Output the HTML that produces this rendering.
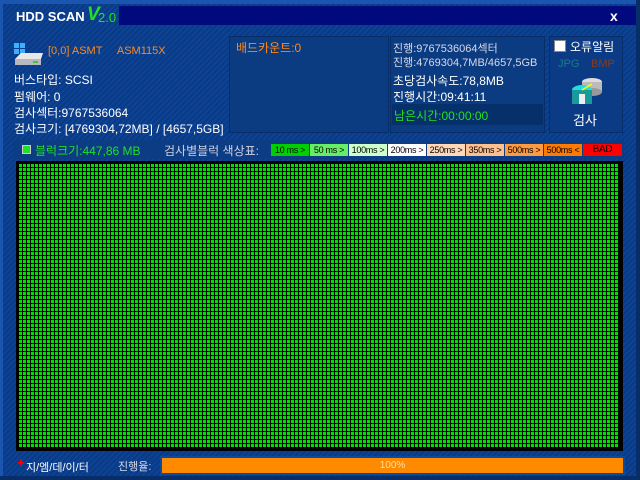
<!DOCTYPE html>
<html><head><meta charset="utf-8"><style>
*{margin:0;padding:0;box-sizing:border-box}
body{width:640px;height:480px;overflow:hidden;position:relative;font-family:"Liberation Sans","Noto Sans CJK KR",sans-serif;font-size:12px;color:#fff;
background:#0c3f8f repeating-linear-gradient(135deg,#0d4394 0 2px,#0a3a86 2px 4px);}
.a{position:absolute;white-space:nowrap}
.panel{position:absolute;background:#0b3c82;border:1px solid #082e6a}
.leg{position:absolute;top:144px;height:12px;font-size:9px;letter-spacing:-0.3px;line-height:12px;color:#000;text-align:center;overflow:hidden}
</style></head><body>
<div class="a" style="left:0;top:0;width:640px;height:4px;background:#1a56b0"></div>
<div class="a" style="left:0;top:0;width:3px;height:480px;background:#1a56b0"></div>
<div class="a" style="left:636px;top:0;width:4px;height:480px;background:#082e6a"></div>
<div class="a" style="left:0;top:476px;width:640px;height:4px;background:#082e6a"></div>
<div class="a" style="left:119px;top:6px;width:517px;height:19px;background:#000a7c"></div>
<div class="a" style="left:16px;top:9px;font-weight:bold;font-size:13px">HDD SCAN</div>
<div class="a" style="left:87px;top:4px;font-weight:bold;font-style:italic;font-size:19px;color:#22e022">V</div>
<div class="a" style="left:98px;top:10px;font-size:13px;color:#22e022">2.0</div>
<div class="a" style="left:610px;top:8px;font-weight:bold;font-size:14px">x</div>

<svg class="a" style="left:13px;top:43px" width="30" height="24">
<rect x="1" y="0" width="5" height="5" fill="#3ab0ff"/><rect x="7" y="0" width="5" height="5" fill="#3ab0ff"/>
<rect x="1" y="6" width="5" height="5" fill="#3ab0ff"/><rect x="7" y="6" width="5" height="5" fill="#3ab0ff"/>
<path d="M2 16 L8 10 L30 10 L28 16 Z" fill="#e8e8e8"/><rect x="2" y="16" width="26" height="6" fill="#b8b8c0"/><rect x="20" y="18" width="5" height="2" fill="#3c3"/>
</svg>
<div class="a" style="left:48px;top:45px;color:#ff8a1a;font-size:11px">[0,0] ASMT &nbsp;&nbsp;&nbsp; ASM115X</div>
<div class="a" style="left:14px;top:71px">버스타입: SCSI</div>
<div class="a" style="left:14px;top:88px">펌웨어: 0</div>
<div class="a" style="left:14px;top:104px">검사섹터:9767536064</div>
<div class="a" style="left:14px;top:120px;width:212px;overflow:hidden">검사크기: [4769304,72MB] / [4657,5GB]</div>

<div class="panel" style="left:229px;top:36px;width:160px;height:97px"></div>
<div class="a" style="left:236px;top:39px;color:#ff8a1a">배드카운트:0</div>
<div class="panel" style="left:390px;top:36px;width:155px;height:97px"></div>
<div class="a" style="left:393px;top:40px;color:#d8d8e8;font-size:11px">진행:9767536064섹터</div>
<div class="a" style="left:393px;top:54px;color:#d8d8e8;font-size:11px;width:150px;overflow:hidden">진행:4769304,7MB/4657,5GB</div>
<div class="a" style="left:393px;top:72px">초당검사속도:78,8MB</div>
<div class="a" style="left:393px;top:88px">진행시간:09:41:11</div>
<div class="a" style="left:392px;top:104px;width:151px;height:21px;background:#06306a"></div>
<div class="a" style="left:394px;top:107px;color:#22e022">남은시간:00:00:00</div>

<div class="panel" style="left:549px;top:36px;width:74px;height:97px;background:#0b3b84"></div>
<div class="a" style="left:554px;top:40px;width:12px;height:12px;background:#fff;border:1px solid #888"></div>
<div class="a" style="left:570px;top:38px">오류알림</div>
<div class="a" style="left:558px;top:58px;color:#1a7a8a;font-size:11px">JPG</div>
<div class="a" style="left:591px;top:58px;color:#8a3a1a;font-size:11px">BMP</div>
<svg class="a" style="left:570px;top:76px" width="34" height="32">
<ellipse cx="22" cy="6" rx="10" ry="4" fill="#ddd"/><rect x="12" y="6" width="20" height="10" fill="#bbb"/><ellipse cx="22" cy="16" rx="10" ry="4" fill="#999"/>
<ellipse cx="12" cy="14" rx="10" ry="5" fill="#2dd"/><rect x="2" y="14" width="20" height="14" fill="#1a9a9a"/><rect x="9" y="18" width="6" height="10" fill="#eee"/>
<line x1="12" y1="14" x2="22" y2="8" stroke="#ff0" stroke-width="1.5"/></svg>
<div class="a" style="left:573px;top:110px;font-size:13px">검사</div>

<div class="a" style="left:14px;top:140px;width:610px;height:19px;background:#0b3c84"></div>
<div class="a" style="left:22px;top:145px;width:9px;height:9px;background:#22e022;border:1px solid #ccc"></div>
<div class="a" style="left:35px;top:142px;color:#22e022">블럭크기:447,86 MB</div>
<div class="a" style="left:164px;top:142px;color:#d0d0e0">검사별블럭 색상표:</div>
<div class="leg" style="left:271px;width:38px;background:#00d000">10 ms &gt;</div>
<div class="leg" style="left:310px;width:38px;background:#66ee66">50 ms &gt;</div>
<div class="leg" style="left:349px;width:38px;background:#ccffcc">100ms &gt;</div>
<div class="leg" style="left:388px;width:38px;background:#ffffff">200ms &gt;</div>
<div class="leg" style="left:427px;width:38px;background:#ffd8b8">250ms &gt;</div>
<div class="leg" style="left:466px;width:38px;background:#ffc090">350ms &gt;</div>
<div class="leg" style="left:505px;width:38px;background:#ff9a40">500ms &gt;</div>
<div class="leg" style="left:544px;width:38px;background:#ff7a00">500ms &lt;</div>
<div class="leg" style="left:583px;width:39px;background:#ff0000;font-size:10px">BAD</div>

<div class="a" style="left:16px;top:161px;width:607px;height:290px;background:#000"></div>
<div class="a" style="left:19px;top:164px;width:600px;height:284px;
background:repeating-linear-gradient(90deg,transparent 0 3px,#000 3px 4px),repeating-linear-gradient(180deg,#00e000 0 3px,#000 3px 4px)"></div>

<div class="a" style="left:17px;top:457px;color:#f00;font-weight:bold;font-size:13px;line-height:12px">+</div>
<div class="a" style="left:26px;top:459px;font-size:11px">지/엠/데/이/터</div>
<div class="a" style="left:118px;top:458px;font-size:11px;color:#d8d8e8">진행율:</div>
<div class="a" style="left:160px;top:456px;width:465px;height:19px;background:#0a4aa0"></div>
<div class="a" style="left:162px;top:458px;width:461px;height:15px;background:#ff8a00;text-align:center;font-size:10px;line-height:15px;color:#ffe0a0">100%</div>
</body></html>
